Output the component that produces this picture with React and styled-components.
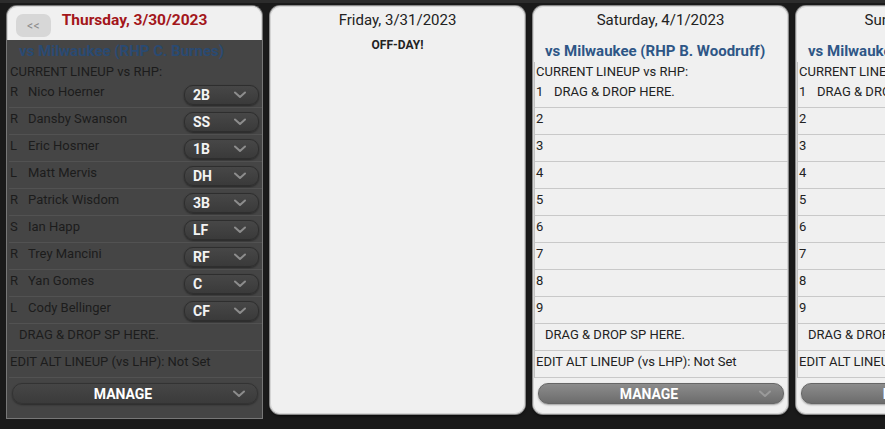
import React from "react";
import styled, { createGlobalStyle, css } from "styled-components";

const Global = createGlobalStyle`
  html, body { margin: 0; padding: 0; background: #1a1a1a; overflow: hidden; }
  body { font-family: Roboto, "Noto Sans", Arial, sans-serif; }
`;

const Page = styled.div`
  width: 885px;
  height: 429px;
  box-sizing: border-box;
  border-top: 3px solid #2c2c2c;
  padding: 3px 0 0 7px;
  display: flex;
  gap: 8px;
  overflow: hidden;
  align-items: flex-start;
`;

const Card = styled.div`
  width: 255px;
  flex-shrink: 0;
  height: 408px;
  box-sizing: border-box;
  background: #f0f0f0;
  border-radius: 10px;
  box-shadow: inset 0 0 0 1px #d4d4d4, 0 0 0 1px #8a8a8a, 0 2px 3px rgba(0, 0, 0, 0.7);
  display: flex;
  flex-direction: column;
  overflow: hidden;
  color: #222;
  ${(p) =>
    p.$dim &&
    css`
      height: 412px;
      border-radius: 10px 10px 0 0;
      box-shadow: inset 0 0 0 1px #d4d4d4, 0 0 0 1px #777;
    `}
`;

const Header = styled.div`
  position: relative;
  height: 34px;
  box-sizing: border-box;
  padding-bottom: 6px;
  flex-shrink: 0;
  display: flex;
  align-items: center;
  justify-content: center;
  font-size: ${(p) => (p.$today ? "15.5px" : "15px")};
  color: ${(p) => (p.$today ? "#a3161a" : "#222")};
  font-weight: ${(p) => (p.$today ? 700 : 400)};
`;

const BackButton = styled.div`
  position: absolute;
  left: 9px;
  top: 8px;
  width: 35px;
  height: 23px;
  border-radius: 7px;
  background: #d7d7d7;
  color: #8a8a8a;
  font-size: 12px;
  font-weight: 400;
  display: flex;
  align-items: center;
  justify-content: center;
  letter-spacing: 0.5px;
`;

const Body = styled.div`
  flex: 1;
  display: flex;
  flex-direction: column;
  background: ${(p) => (p.$dim ? "#454545" : "transparent")};
  color: ${(p) => (p.$dim ? "#1c1c1c" : "#222")};
`;

const OffDay = styled.div`
  text-align: center;
  font-size: 12px;
  line-height: 14px;
  font-weight: 700;
  margin-top: -2px;
`;

const Matchup = styled.div`
  height: 22px;
  padding: 0 0 0 12px;
  box-sizing: border-box;
  display: flex;
  align-items: center;
  font-size: 15px;
  font-weight: 700;
  white-space: nowrap;
  color: ${(p) => (p.$dim ? "#2a4a72" : "#2e5686")};
`;

const List = styled.div`
  margin-left: 1px;
  border-left: 1px solid ${(p) => (p.$dim ? "transparent" : "#c2c2c2")};
  display: flex;
  flex-direction: column;
`;

const Label = styled.div`
  height: 19px;
  font-size: 13px;
  line-height: 19px;
  padding-left: 1px;
  white-space: nowrap;
`;

const Row = styled.div`
  height: 26px;
  border-bottom: 1px solid ${(p) => (p.$dim ? "#525252" : "#c9c9c9")};
  display: flex;
  align-items: flex-start;
  font-size: 13px;
  white-space: nowrap;
  padding-left: ${(p) => p.$indent || 1}px;
`;

const Slot = styled.div`
  width: 18px;
  flex-shrink: 0;
  padding-top: 4px;
  line-height: 14px;
`;

const Name = styled.div`
  flex: 1;
  padding-top: 4px;
  line-height: 14px;
`;

const Pill = styled.div`
  width: 75px;
  height: 20px;
  margin: 4px 3px 0 0;
  box-sizing: border-box;
  border-radius: 9px;
  border: 1px solid #2e2e2e;
  background: linear-gradient(#474747, #3a3a3a);
  box-shadow: 0 1px 2px rgba(0, 0, 0, 0.45);
  display: flex;
  align-items: center;
  justify-content: space-between;
  padding: 0 12px 0 8px;
  color: #f3f3f3;
  font-size: 14px;
  font-weight: 700;
`;

const ManageWrap = styled.div`
  padding: 5px 4px 0 5px;
`;

const Manage = styled.div`
  height: 21px;
  box-sizing: border-box;
  border-radius: 10px;
  display: flex;
  align-items: center;
  padding-right: 12px;
  color: #fff;
  font-size: 14px;
  font-weight: 700;
  ${(p) =>
    p.$dim
      ? css`
          background: linear-gradient(#464646, #3b3b3b);
          border: 1px solid #333;
          box-shadow: 0 1px 2px rgba(0, 0, 0, 0.4);
        `
      : css`
          background: linear-gradient(#8c8c8c, #6c6c6c);
          border: 1px solid #666;
          box-shadow: 0 1px 2px rgba(0, 0, 0, 0.35);
        `}
`;

const ManageText = styled.span`
  flex: 1;
  text-align: center;
`;

const Chevron = ({ color }) => (
  <svg width="12" height="8" viewBox="0 0 12 8">
    <polyline points="1,1.5 6,6 11,1.5" fill="none" stroke={color} strokeWidth="2" strokeLinecap="round" strokeLinejoin="round" />
  </svg>
);

const lineup = [
  ["R", "Nico Hoerner", "2B"],
  ["R", "Dansby Swanson", "SS"],
  ["L", "Eric Hosmer", "1B"],
  ["L", "Matt Mervis", "DH"],
  ["R", "Patrick Wisdom", "3B"],
  ["S", "Ian Happ", "LF"],
  ["R", "Trey Mancini", "RF"],
  ["R", "Yan Gomes", "C"],
  ["L", "Cody Bellinger", "CF"],
];

function Footer({ dim }) {
  return (
    <>
      <Row $dim={dim} $indent={10}>
        <Name>DRAG &amp; DROP SP HERE.</Name>
      </Row>
      <Row $dim={dim}>
        <Name>EDIT ALT LINEUP (vs LHP): Not Set</Name>
      </Row>
    </>
  );
}

function EmptyGame({ date, opp }) {
  return (
    <Card>
      <Header>{date}</Header>
      <Body>
        <Matchup>{opp}</Matchup>
        <List>
          <Label>CURRENT LINEUP vs RHP:</Label>
          {[1, 2, 3, 4, 5, 6, 7, 8, 9].map((n) => (
            <Row key={n}>
              <Slot>{n}</Slot>
              <Name>{n === 1 ? "DRAG & DROP HERE." : ""}</Name>
            </Row>
          ))}
          <Footer />
        </List>
        <ManageWrap>
          <Manage>
            <ManageText>MANAGE</ManageText>
            <Chevron color="#9a9a9a" />
          </Manage>
        </ManageWrap>
      </Body>
    </Card>
  );
}

export default function App() {
  return (
    <>
      <Global />
      <Page>
        <Card $dim>
          <Header $today>
            <BackButton>&lt;&lt;</BackButton>
            Thursday, 3/30/2023
          </Header>
          <Body $dim>
            <Matchup $dim>vs Milwaukee (RHP C. Burnes)</Matchup>
            <List $dim>
              <Label>CURRENT LINEUP vs RHP:</Label>
              {lineup.map(([h, n, pos]) => (
                <Row key={n} $dim>
                  <Slot>{h}</Slot>
                  <Name>{n}</Name>
                  <Pill>
                    {pos}
                    <Chevron color="#8c8c8c" />
                  </Pill>
                </Row>
              ))}
              <Footer dim />
            </List>
            <ManageWrap>
              <Manage $dim>
                <ManageText>MANAGE</ManageText>
                <Chevron color="#8c8c8c" />
              </Manage>
            </ManageWrap>
          </Body>
        </Card>
        <Card>
          <Header>Friday, 3/31/2023</Header>
          <Body>
            <OffDay>OFF-DAY!</OffDay>
          </Body>
        </Card>
        <EmptyGame date="Saturday, 4/1/2023" opp="vs Milwaukee (RHP B. Woodruff)" />
        <EmptyGame date="Sunday, 4/2/2023" opp="vs Milwaukee (LHP E. Lauer)" />
      </Page>
    </>
  );
}
